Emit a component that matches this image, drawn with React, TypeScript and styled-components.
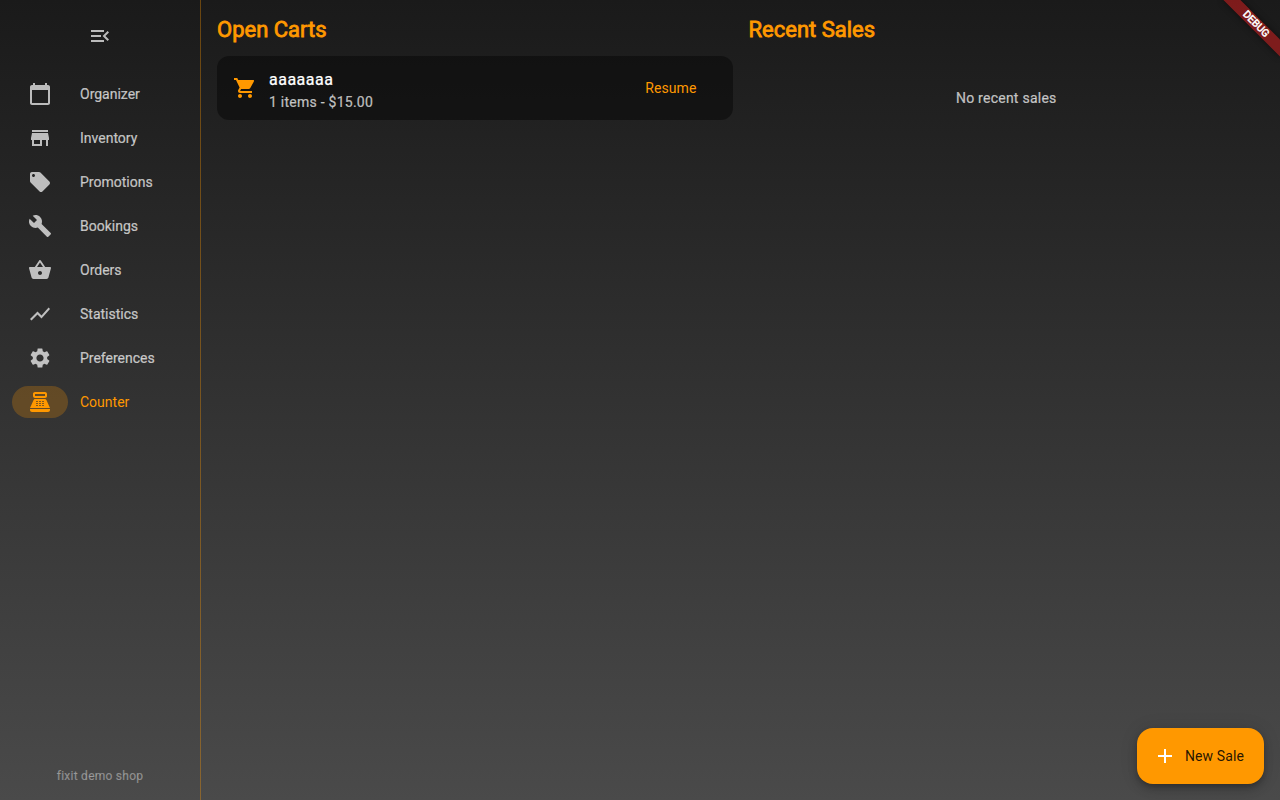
import React from "react";
import styled, { createGlobalStyle } from "styled-components";
import type { IconType } from "react-icons";
import {
  MdAdd,
  MdBuild,
  MdCalendarToday,
  MdLocalOffer,
  MdMenuOpen,
  MdPointOfSale,
  MdSettings,
  MdShoppingBasket,
  MdShoppingCart,
  MdShowChart,
  MdStore,
} from "react-icons/md";

const GlobalStyle = createGlobalStyle`
  * { box-sizing: border-box; }
  body { margin: 0; overflow: hidden; font-family: Roboto, "Liberation Sans", sans-serif; }
  button { font-family: inherit; border: 0; background: none; padding: 0; cursor: pointer; }
`;

const accent = "#ff9800";
const muted = "rgba(255, 255, 255, 0.7)";

const Shell = styled.div`
  position: relative;
  display: flex;
  width: 100%;
  height: 100vh;
  overflow: hidden;
  background: linear-gradient(180deg, #1a1a1a, #4a4a4a);
`;

const Sidebar = styled.aside`
  display: flex;
  flex-direction: column;
  align-items: center;
  width: 201px;
  flex: none;
  padding: 16px 0;
  border-right: 1px solid rgba(255, 152, 0, 0.35);
`;

const MenuButton = styled.button`
  display: grid;
  place-items: center;
  width: 40px;
  height: 40px;
  color: ${muted};
`;

const Nav = styled.nav`
  display: flex;
  flex-direction: column;
  gap: 12px;
  width: 100%;
  padding: 22px 12px 0;
`;

const NavItem = styled.button<{ $active?: boolean }>`
  display: flex;
  align-items: center;
  gap: 12px;
  height: 32px;
  font-size: 14px;
  line-height: 20px;
  color: ${(p) => (p.$active ? accent : muted)};
  -webkit-text-stroke: ${(p) => (p.$active ? "0" : "0.2px")};
`;

const Indicator = styled.span<{ $active?: boolean }>`
  display: grid;
  place-items: center;
  width: 56px;
  height: 32px;
  border-radius: 16px;
  background: ${(p) => (p.$active ? "rgba(255, 152, 0, 0.24)" : "transparent")};
`;

const ShopName = styled.div`
  margin-top: auto;
  font-size: 12px;
  line-height: 16px;
  letter-spacing: 0.25px;
  color: rgba(255, 255, 255, 0.36);
  -webkit-text-stroke: 0.2px;
`;

const Main = styled.main`
  display: grid;
  grid-template-columns: 1fr 1fr;
  gap: 16px;
  flex: 1;
  padding: 16px;
`;

const Column = styled.section`
  min-width: 0;
`;

const Heading = styled.h2`
  margin: 0 0 12px;
  font-size: 22px;
  line-height: 28px;
  font-weight: 400;
  color: ${accent};
  -webkit-text-stroke: 0.8px;
`;

const CartCard = styled.article`
  display: flex;
  align-items: center;
  gap: 12px;
  height: 64px;
  padding: 0 36px 0 16px;
  border-radius: 12px;
  background: rgba(0, 0, 0, 0.4);
  color: ${accent};
`;

const CartInfo = styled.div`
  flex: 1;
  padding-top: 4px;
`;

const CartName = styled.div`
  font-size: 16px;
  line-height: 24px;
  letter-spacing: 0.5px;
  color: #fff;
  -webkit-text-stroke: 0.25px;
`;

const CartDetail = styled.div`
  font-size: 14px;
  line-height: 20px;
  letter-spacing: 0.25px;
  color: ${muted};
  -webkit-text-stroke: 0.2px;
`;

const ResumeButton = styled.button`
  font-size: 14px;
  line-height: 20px;
  letter-spacing: 0.1px;
  color: ${accent};
`;

const EmptyMessage = styled.p`
  margin: 0;
  padding-top: 32px;
  font-size: 14px;
  line-height: 20px;
  letter-spacing: 0.25px;
  text-align: center;
  color: ${muted};
  -webkit-text-stroke: 0.2px;
`;

const NewSaleButton = styled.button`
  position: absolute;
  right: 16px;
  bottom: 16px;
  display: flex;
  align-items: center;
  gap: 8px;
  height: 56px;
  width: 127px;
  padding: 0 16px;
  border-radius: 16px;
  background: ${accent};
  color: rgba(0, 0, 0, 0.87);
  font-size: 14px;
  letter-spacing: 0.1px;
  white-space: nowrap;
  box-shadow: 0 3px 5px -1px rgba(0, 0, 0, 0.2), 0 6px 10px rgba(0, 0, 0, 0.14),
    0 1px 18px rgba(0, 0, 0, 0.12);

  svg {
    color: #fff;
  }
`;

const DebugBanner = styled.div`
  position: absolute;
  top: 28px;
  right: -40px;
  width: 80px;
  height: 12px;
  transform: rotate(45deg);
  transform-origin: 40px -28px;
  background: rgba(183, 28, 28, 0.63);
  box-shadow: 0 0 6px rgba(0, 0, 0, 0.5);
  color: #fff;
  font-size: 10.2px;
  line-height: 12px;
  text-align: center;
  -webkit-text-stroke: 0.5px;
`;

const navItems: { label: string; icon: IconType; active?: boolean }[] = [
  { label: "Organizer", icon: MdCalendarToday },
  { label: "Inventory", icon: MdStore },
  { label: "Promotions", icon: MdLocalOffer },
  { label: "Bookings", icon: MdBuild },
  { label: "Orders", icon: MdShoppingBasket },
  { label: "Statistics", icon: MdShowChart },
  { label: "Preferences", icon: MdSettings },
  { label: "Counter", icon: MdPointOfSale, active: true },
];

export default function App() {
  return (
    <Shell>
      <GlobalStyle />
      <Sidebar>
        <MenuButton aria-label="Collapse menu">
          <MdMenuOpen size={24} />
        </MenuButton>
        <Nav>
          {navItems.map(({ label, icon: Icon, active }) => (
            <NavItem key={label} $active={active}>
              <Indicator $active={active}>
                <Icon size={24} />
              </Indicator>
              {label}
            </NavItem>
          ))}
        </Nav>
        <ShopName>fixit demo shop</ShopName>
      </Sidebar>
      <Main>
        <Column>
          <Heading>Open Carts</Heading>
          <CartCard>
            <MdShoppingCart size={24} />
            <CartInfo>
              <CartName>aaaaaaa</CartName>
              <CartDetail>1 items - $15.00</CartDetail>
            </CartInfo>
            <ResumeButton>Resume</ResumeButton>
          </CartCard>
        </Column>
        <Column>
          <Heading>Recent Sales</Heading>
          <EmptyMessage>No recent sales</EmptyMessage>
        </Column>
      </Main>
      <NewSaleButton>
        <MdAdd size={24} />
        New Sale
      </NewSaleButton>
      <DebugBanner>DEBUG</DebugBanner>
    </Shell>
  );
}
